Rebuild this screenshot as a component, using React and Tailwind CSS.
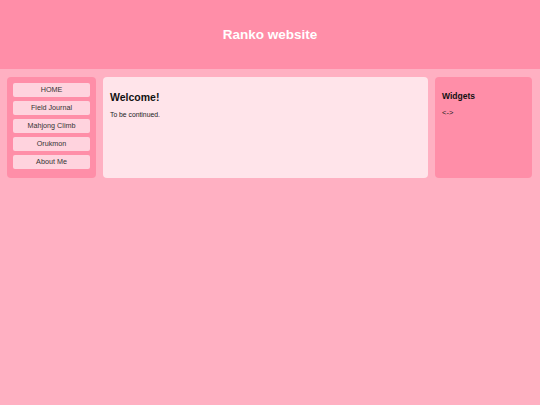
const navItems = ['HOME', 'Field Journal', 'Mahjong Climb', 'Orukmon', 'About Me'];

export default function App() {
    return (
        <div className="w-[540px] h-[405px] bg-[#ffb0c2] font-['Liberation_Sans',Arial,sans-serif] overflow-hidden">
            {/* Header */}
            <header className="h-[69px] bg-[#ff8ea8] flex items-center justify-center">
                <h1 className="text-white font-bold text-[13.5px] leading-none">Ranko website</h1>
            </header>

            <div className="flex gap-[7px] px-[7px] pt-[8px]">
                {/* Sidebar nav */}
                <nav className="w-[89px] h-[101px] bg-[#ff8ea8] rounded-[4px] p-[6px] flex flex-col gap-[4px]">
                    {navItems.map((item) => (
                        <button
                            key={item}
                            className="h-[14px] w-full bg-[#ffd3de] rounded-[2px] text-[7.2px] text-[#333] leading-none flex items-center justify-center"
                        >
                            {item}
                        </button>
                    ))}
                </nav>

                {/* Main content */}
                <main className="w-[325px] h-[101px] bg-[#ffe4ea] rounded-[4px] px-[7px] pt-[15px]">
                    <h2 className="text-[10.5px] font-bold text-[#111] leading-none">Welcome!</h2>
                    <p className="text-[6.8px] text-[#222] mt-[9px] leading-none">To be continued.</p>
                </main>

                {/* Widgets */}
                <aside className="w-[97px] h-[101px] bg-[#ff8ea8] rounded-[4px] px-[7px] pt-[15px]">
                    <h3 className="text-[8.5px] font-bold text-[#111] leading-none">Widgets</h3>
                    <p className="text-[7.5px] text-[#222] mt-[8px] leading-none">{'<->'}</p>
                </aside>
            </div>
        </div>
    );
}
